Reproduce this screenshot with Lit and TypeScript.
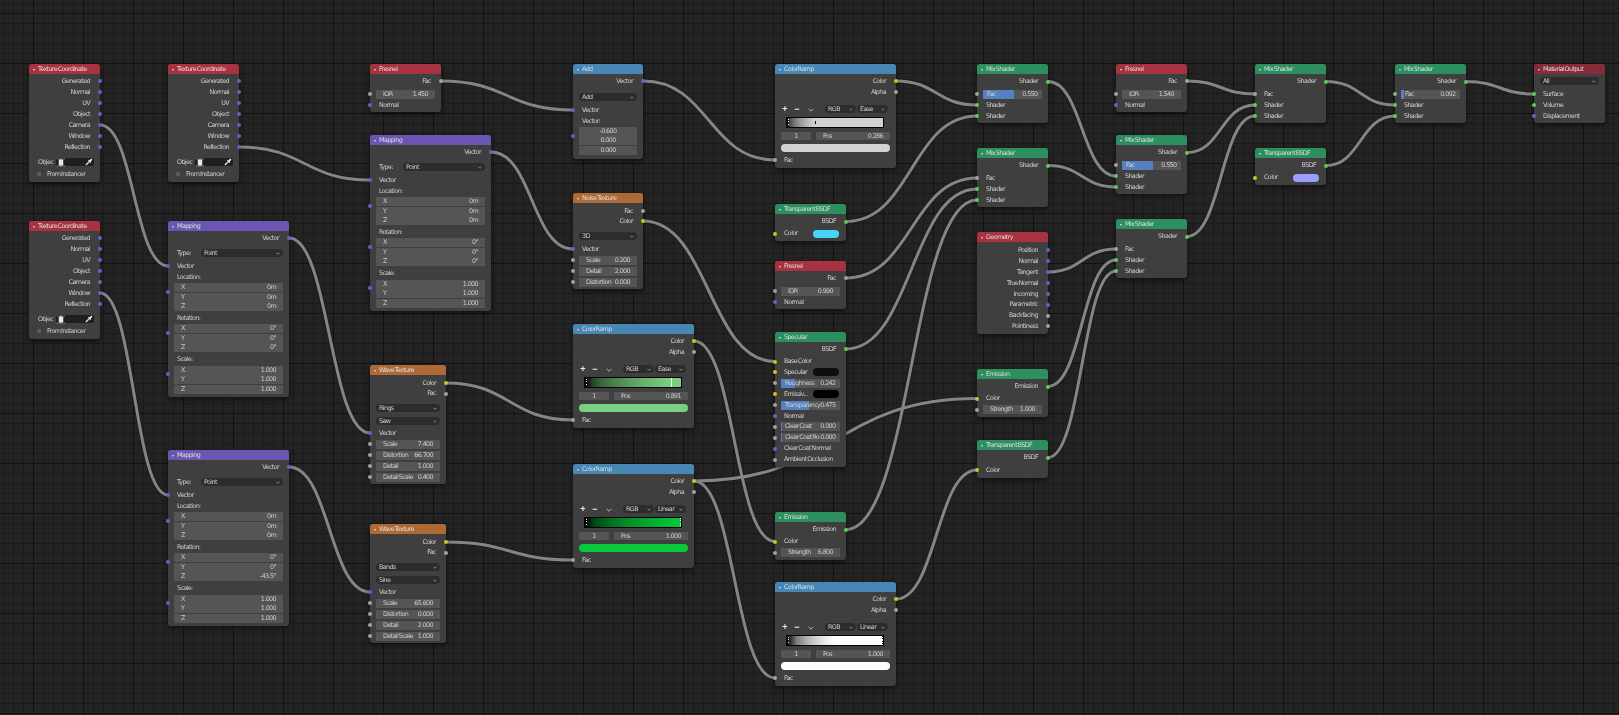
import { LitElement, html, css, svg } from "lit";
import { customElement } from "lit/decorators.js";

type Sock = "v" | "c" | "f" | "s";

interface Row {
  at: number;
  k: string;
  t?: string;
  v?: string;
  s?: Sock;
  id?: string;
  fill?: number;
  dy?: number;
  color?: string;
  pos?: number;
  mode?: string;
}

interface Node {
  id: string;
  title: string;
  cat: string;
  x: number;
  y: number;
  w: number;
  h: number;
  rows: Row[];
}

// height of each row kind, used to place the row centre at its "at" value
const HEIGHTS: Record<string, number> = {
  out: 10, in: 10, head: 10, field: 9, swatch: 9, drop: 9, typed: 9, obj: 9, inst: 9,
  ctrl: 9, bar: 11, nums: 9, big: 9,
};

const out = (at: number, t: string, s: Sock): Row => ({ at, k: "out", t, s });
const inp = (at: number, t: string, s: Sock, id?: string): Row => ({ at, k: "in", t, s, id });
const fld = (at: number, t: string, v: string, s?: Sock, fill?: number): Row => ({ at, k: "field", t, v, s, fill });
const swatch = (at: number, t: string, s: Sock, color: string): Row => ({ at, k: "swatch", t, s, color });
const head = (at: number, t: string, s?: Sock, dy = 0): Row => ({ at, k: "head", t, s, dy });
const drop = (at: number, t: string): Row => ({ at, k: "drop", t });

const texCoord = (id: string, x: number, y: number): Node => ({
  id, title: "Texture Coordinate", cat: "input", x, y, w: 71, h: 118,
  rows: [
    ...["Generated", "Normal", "UV", "Object", "Camera", "Window", "Reflection"].map((t, i) => out(17 + i * 11, t, "v")),
    { at: 98, k: "obj", t: "Objec" },
    { at: 110, k: "inst", t: "From Instancer" },
  ],
});

const mapping = (id: string, x: number, y: number, rz = "0°"): Node => ({
  id, title: "Mapping", cat: "vector", x, y, w: 121, h: 176,
  rows: [
    out(17, "Vector", "v"),
    { at: 32, k: "typed", t: "Type:", v: "Point" },
    inp(45, "Vector", "v"),
    head(56, "Location:", "v", 15),
    fld(66.5, "X", "0m"), fld(76, "Y", "0m"), fld(85.5, "Z", "0m"),
    head(97, "Rotation:", "v", 15),
    fld(107.5, "X", "0°"), fld(117, "Y", "0°"), fld(126.5, "Z", rz),
    head(138, "Scale:", "v", 15),
    fld(149, "X", "1.000"), fld(158.5, "Y", "1.000"), fld(168, "Z", "1.000"),
  ],
});

const fresnel = (id: string, x: number, y: number, ior: string): Node => ({
  id, title: "Fresnel", cat: "input", x, y, w: 71, h: 48,
  rows: [out(17, "Fac", "f"), fld(30, "IOR", ior, "f"), inp(41, "Normal", "v")],
});

const mix = (id: string, x: number, y: number, fac?: string, fill?: number): Node => ({
  id, title: "Mix Shader", cat: "shader", x, y, w: 71, h: 59,
  rows: [
    out(17.5, "Shader", "s"),
    fac ? fld(30, "Fac", fac, "f", fill) : inp(30, "Fac", "f"),
    inp(41, "Shader", "s", "s1"),
    inp(52, "Shader", "s", "s2"),
  ],
});

const transparent = (id: string, x: number, y: number, color?: string): Node => ({
  id, title: "Transparent BSDF", cat: "shader", x, y, w: 71, h: color ? 37 : 38,
  rows: [
    out(17.5, "BSDF", "s"),
    color ? swatch(29.5, "Color", "c", color) : inp(30, "Color", "c"),
  ],
});

const emission = (id: string, x: number, y: number, strength: string): Node => ({
  id, title: "Emission", cat: "shader", x, y, w: 71, h: 48,
  rows: [out(17.5, "Emission", "s"), inp(29.5, "Color", "c"), fld(40.5, "Strength", strength, "f")],
});

const ramp = (id: string, x: number, y: number, color: string, pos: number, mode: string, v: string): Node => ({
  id, title: "ColorRamp", cat: "converter", x, y, w: 121, h: 104,
  rows: [
    out(17, "Color", "c"),
    out(28, "Alpha", "f"),
    { at: 45, k: "ctrl", v: mode },
    { at: 58, k: "bar", color, pos },
    { at: 72, k: "nums", v },
    { at: 84, k: "big", color },
    inp(96, "Fac", "f"),
  ],
});

const wave = (id: string, x: number, y: number, a: string, b: string, vals: string[]): Node => ({
  id, title: "Wave Texture", cat: "texture", x, y, w: 76, h: 119,
  rows: [
    out(18, "Color", "c"),
    out(28.5, "Fac", "f"),
    drop(43, a),
    drop(56, b),
    inp(68, "Vector", "v"),
    fld(79, "Scale", vals[0], "f"),
    fld(90, "Distortion", vals[1], "f"),
    fld(101, "Detail", vals[2], "f"),
    fld(112, "Detail Scale", vals[3], "f"),
  ],
});

const NODES: Node[] = [
  texCoord("tc1", 29, 64),
  texCoord("tc2", 168, 64),
  texCoord("tc3", 29, 221),
  mapping("map1", 168, 221),
  mapping("map2", 168, 450, "-43.5°"),
  mapping("map3", 370, 135),
  fresnel("fr1", 370, 64, "1.450"),
  wave("wave1", 370, 365, "Rings", "Saw", ["7.400", "66.700", "1.000", "0.400"]),
  wave("wave2", 370, 524, "Bands", "Sine", ["65.600", "0.000", "2.000", "1.000"]),
  {
    id: "add", title: "Add", cat: "converter", x: 573, y: 64, w: 70, h: 95,
    rows: [
      out(17, "Vector", "v"),
      drop(33, "Add"),
      inp(46, "Vector", "v"),
      head(57, "Vector:", "v", 15),
      fld(67, "", "-0.600"), fld(76.5, "", "0.000"), fld(86, "", "0.000"),
    ],
  },
  {
    id: "noise", title: "Noise Texture", cat: "texture", x: 573, y: 193, w: 70, h: 96,
    rows: [
      out(18, "Fac", "f"),
      out(28, "Color", "c"),
      drop(43, "3D"),
      inp(56, "Vector", "v"),
      fld(67, "Scale", "0.200", "f"),
      fld(78, "Detail", "2.000", "f"),
      fld(89, "Distortion", "0.000", "f"),
    ],
  },
  ramp("ramp2", 573, 324, "#79d080", 0.891, "Ease", "0.891"),
  ramp("ramp3", 573, 464, "#07c93a", 1, "Linear", "1.000"),
  ramp("ramp1", 775, 64, "#d2d2d2", 0.286, "Ease", "0.286"),
  ramp("ramp4", 775, 582, "#ffffff", 1, "Linear", "1.000"),
  transparent("tr1", 775, 204, "#44d6f6"),
  fresnel("fr2", 775, 261, "0.990"),
  {
    id: "spec", title: "Specular", cat: "shader", x: 775, y: 332, w: 71, h: 135,
    rows: [
      out(17, "BSDF", "s"),
      inp(29.5, "Base Color", "c"),
      swatch(40, "Specular", "c", "#0e0e0e"),
      fld(51, "Roughness", "0.242", "f", 24),
      swatch(62, "Emissiv...", "c", "#000000"),
      fld(73, "Transparency", "0.475", "f", 47),
      inp(84, "Normal", "v"),
      fld(94.5, "Clear Coat", "0.000", "f", 2),
      fld(105.5, "Clear Coat Ro", "0.000", "f", 2),
      inp(116.5, "Clear Coat Normal", "v"),
      inp(127.5, "Ambient Occlusion", "f"),
    ],
  },
  emission("em2", 775, 512, "6.800"),
  mix("mix1", 977, 64, "0.550", 52),
  mix("mix2", 977, 148),
  {
    id: "geo", title: "Geometry", cat: "input", x: 977, y: 232, w: 71, h: 102,
    rows: [
      out(18, "Position", "v"), out(29, "Normal", "v"), out(40, "Tangent", "v"), out(51, "True Normal", "v"),
      out(62, "Incoming", "v"), out(72.5, "Parametric", "v"), out(83.5, "Backfacing", "f"), out(94, "Pointiness", "f"),
    ],
  },
  emission("em1", 977, 369, "1.000"),
  transparent("tr2", 977, 440),
  fresnel("fr3", 1116, 64, "1.540"),
  mix("mix3", 1116, 135, "0.550", 52),
  mix("mix4", 1116, 219),
  mix("mix5", 1255, 64),
  transparent("tr3", 1255, 148, "#9a9cff"),
  mix("mix6", 1395, 64, "0.092", 5),
  {
    id: "output", title: "Material Output", cat: "output", x: 1534, y: 64, w: 71, h: 59,
    rows: [drop(17, "All"), inp(30, "Surface", "s"), inp(41, "Volume", "s"), inp(52, "Displacement", "v")],
  },
];

// from node, output, to node, input
const WIRES: [string, string, string, string][] = [
  ["tc1", "Camera", "map1", "Vector"],
  ["tc2", "Reflection", "map3", "Vector"],
  ["tc3", "Window", "map2", "Vector"],
  ["map1", "Vector", "wave1", "Vector"],
  ["map2", "Vector", "wave2", "Vector"],
  ["fr1", "Fac", "add", "Vector"],
  ["map3", "Vector", "noise", "Vector"],
  ["add", "Vector", "ramp1", "Fac"],
  ["noise", "Color", "spec", "Base Color"],
  ["wave1", "Color", "ramp2", "Fac"],
  ["wave2", "Color", "ramp3", "Fac"],
  ["ramp2", "Color", "em2", "Color"],
  ["ramp3", "Color", "em1", "Color"],
  ["ramp3", "Color", "ramp4", "Fac"],
  ["ramp4", "Color", "tr2", "Color"],
  ["ramp1", "Color", "mix1", "s1"],
  ["tr1", "BSDF", "mix1", "s2"],
  ["fr2", "Fac", "mix2", "Fac"],
  ["spec", "BSDF", "mix2", "s1"],
  ["em2", "Emission", "mix2", "s2"],
  ["mix1", "Shader", "mix3", "s1"],
  ["mix2", "Shader", "mix3", "s2"],
  ["geo", "Tangent", "mix4", "Fac"],
  ["em1", "Emission", "mix4", "s1"],
  ["tr2", "BSDF", "mix4", "s2"],
  ["fr3", "Fac", "mix5", "Fac"],
  ["mix3", "Shader", "mix5", "s1"],
  ["mix4", "Shader", "mix5", "s2"],
  ["mix5", "Shader", "mix6", "s1"],
  ["tr3", "BSDF", "mix6", "s2"],
  ["mix6", "Shader", "output", "Surface"],
];

function wirePath(w: [string, string, string, string]) {
  const a = NODES.find((n) => n.id === w[0])!;
  const b = NODES.find((n) => n.id === w[2])!;
  const ra = a.rows.find((r) => r.k === "out" && r.t === w[1])!;
  const rb = b.rows.find((r) => r.k !== "out" && (r.id ?? r.t) === w[3])!;
  const x1 = a.x + a.w, y1 = a.y + ra.at;
  const x2 = b.x, y2 = b.y + rb.at;
  const h = (x2 - x1) * 0.5;
  return `M${x1} ${y1}C${x1 + h} ${y1} ${x2 - h} ${y2} ${x2} ${y2}`;
}

function rampGradient(color: string, pos: number) {
  const c = [1, 3, 5].map((i) => parseInt(color.slice(i, i + 2), 16));
  // the white ramp in the shot saturates well before its end
  const gain = color === "#ffffff" ? 1.4 : 1;
  const stops: string[] = [];
  for (let i = 0; i <= 10; i++) {
    const t = i / 10;
    const g = t <= 0.0031 ? t * 12.92 : 1.055 * Math.pow(t, 1 / 2.4) - 0.055;
    stops.push(`rgb(${c.map((v) => Math.min(255, Math.round(v * g * gain))).join(",")}) ${(t * pos * 100).toFixed(1)}%`);
  }
  return `linear-gradient(90deg,${stops.join(",")})`;
}

const chevron = html`<svg class="chev" viewBox="0 0 5 3"><path d="M.5 .5L2.5 2.500L4.500 .5" fill="none" stroke="#bbb" stroke-width=".8"/></svg>`;

const cube = html`<svg class="cube" viewBox="0 0 8 10">
  <rect x="1.5" y="1.5" width="5" height="7" fill="#e8e8e8"/>
  <path d="M0 1h1M0 9h1M7 1h1M7 9h1M3 0h2M3 10h2" stroke="#ddd" stroke-width="1"/>
</svg>`;

const dropper = html`<svg class="dropper" viewBox="0 0 9 9">
  <path d="M1 8L5 4" stroke="#ddd" stroke-width="1.6"/>
  <path d="M5 2.5L6.8 .9a1 1 0 0 1 1.3 1.3L6.5 4L7 4.800L6.300 5.500L3.500 2.700L4.200 2z" fill="#eee"/>
</svg>`;

@customElement("app-root")
export class AppRoot extends LitElement {
  static styles = css`
    :host {
      display: block;
      background: #232323;
      font-family: "DejaVu Sans", sans-serif;
      font-size: 6.4px;
      letter-spacing: -0.62px;
      word-spacing: -0.8px;
      color: #cdcdcd;
    }
    .canvas {
      position: relative;
      width: 1619px;
      height: 715px;
      overflow: hidden;
      filter: blur(0.3px);
      background-color: #232323;
      background-image:
        linear-gradient(#121212 1px, transparent 1px),
        linear-gradient(90deg, #121212 1px, transparent 1px),
        linear-gradient(#1b1b1b 1px, transparent 1px),
        linear-gradient(90deg, #1b1b1b 1px, transparent 1px);
      background-size: 50px 50px, 50px 50px, 10px 10px, 10px 10px;
      background-position: 0 13px, 33px 0, 0 3px, 3px 0;
    }
    .wires {
      position: absolute;
      left: 0;
      top: 0;
    }
    .wire-edge {
      fill: none;
      stroke: #1c1c1c;
      stroke-width: 4.8;
    }
    .wire {
      fill: none;
      stroke: #858585;
      stroke-width: 3;
    }
    .node {
      position: absolute;
      display: flex;
      flex-direction: column;
      background: #3f3f3f;
      border-radius: 3px;
      box-shadow: 0 2px 5px rgba(0, 0, 0, 0.55);
    }
    .title {
      flex: none;
      display: flex;
      align-items: center;
      gap: 3px;
      height: 10px;
      padding: 0 0 1px 4px;
      box-sizing: border-box;
      border-radius: 3px 3px 0 0;
      color: #dcdcdc;
      white-space: nowrap;
    }
    .title::before {
      content: "";
      margin-top: 2px;
      border-left: 1.8px solid transparent;
      border-right: 1.8px solid transparent;
      border-top: 2.6px solid #e4e4e4;
    }
    .input { background: #a8323f; }
    .vector { background: #6b57b3; }
    .converter { background: #4687b4; }
    .texture { background: #ad6a36; }
    .shader { background: #2d8f60; }
    .output { background: #862c39; }

    .row {
      position: relative;
      flex: none;
      display: flex;
      align-items: center;
      white-space: nowrap;
    }
    .row span { position: relative; top: -0.5px; }
    .k-out { height: 10px; justify-content: flex-end; padding-right: 10px; }
    .k-in, .k-head { height: 10px; padding-left: 9px; }
    .k-field, .k-swatch, .k-drop, .k-typed, .k-nums, .k-big, .k-ctrl, .k-obj, .k-inst { height: 9px; }
    .k-bar { height: 11px; }

    .sock {
      position: absolute;
      width: 4px;
      height: 4px;
      margin-top: -2px;
      border-radius: 50%;
      top: 50%;
      left: -2px;
    }
    .k-out .sock { left: auto; right: -2px; }
    .sock-v { background: #6363c7; }
    .sock-c { background: #c7c729; }
    .sock-f { background: #a1a1a1; }
    .sock-s { background: #63c763; }

    .field {
      position: relative;
      flex: 1;
      display: flex;
      justify-content: space-between;
      align-items: center;
      height: 9px;
      margin: 0 6px;
      padding: 0 7px;
      background: #555;
      overflow: hidden;
    }
    .field.center { justify-content: center; padding: 0; }
    .field.slider { padding: 0 4.5px 0 4px; }
    .fill {
      position: absolute;
      left: 0;
      top: 0;
      bottom: 0;
      background: #5680c2;
    }
    .k-swatch { padding-left: 9px; justify-content: space-between; padding-right: 7px; }
    .chip { width: 26px; height: 8px; border-radius: 4px; }
    .pill {
      flex: 1;
      display: flex;
      justify-content: space-between;
      align-items: center;
      height: 8px;
      margin: 0 6px;
      padding: 0 3px;
      border-radius: 4px;
      background: #2c2c2c;
    }
    .typed-label { padding-left: 9px; width: 16px; }
    .k-typed .pill { margin-left: 8px; }
    .chev { width: 4px; height: 3px; }

    .k-obj { padding-left: 9px; }
    .obj-label { width: 18px; }
    .obj-field {
      flex: none;
      display: flex;
      justify-content: space-between;
      align-items: center;
      width: 38px;
      height: 8px;
      padding: 0 1px;
      box-sizing: border-box;
      background: #1f1f1f;
      border-radius: 2px;
    }
    .cube { width: 8px; height: 9px; }
    .dropper { width: 8px; height: 8px; }
    .k-inst { padding-left: 8px; gap: 6px; }
    .check { width: 4px; height: 4px; background: #595959; }

    .k-ctrl { padding: 0 6px; }
    .tool {
      flex: none;
      width: 12px;
      text-align: center;
      color: #eee;
      font: bold 9px "Liberation Sans", sans-serif;
      letter-spacing: 0;
    }
    .k-ctrl .pill { margin: 0; flex: none; width: 31px; box-sizing: border-box; }
    .k-ctrl .pill + .pill { margin-left: 1px; }
    .tool .chev { width: 6px; height: 4px; margin-left: 4px; }
    .tools { display: flex; align-items: center; flex: none; width: 46px; margin-left: -2px; }

    .bar {
      position: relative;
      margin-left: 11px;
      width: 98px;
      height: 11px;
      box-sizing: border-box;
      border: 1px solid #000;
      border-bottom-width: 1.5px;
    }
    .stop {
      position: absolute;
      top: 0;
      bottom: 0;
      width: 1px;
      background: #fff;
    }
    .stop-short { top: 3px; bottom: 3px; background: #000; }
    .stop-end {
      left: auto;
      right: 0;
      background: repeating-linear-gradient(#fff 0 1px, transparent 1px 2.4px);
    }
    .stop-end-dark { background: repeating-linear-gradient(#111 0 1px, transparent 1px 2.4px); }
    .first {
      position: absolute;
      left: 1px;
      top: 1px;
      bottom: 1px;
      width: 1px;
      background: repeating-linear-gradient(#fff 0 1px, transparent 1px 2.4px);
    }

    .k-nums { padding: 0 6px; gap: 5px; }
    .num {
      flex: none;
      display: flex;
      justify-content: space-between;
      align-items: center;
      height: 8px;
      box-sizing: border-box;
      background: #555;
      padding: 0 7px;
    }
    .num-a { width: 30px; justify-content: center; }
    .num-b { width: 74px; }
    .big {
      margin: 0 6px;
      flex: 1;
      height: 8px;
      border-radius: 4px;
    }
  `;

  renderStop(r: Row) {
    if (r.pos === 1) {
      return html`<i class="stop stop-end ${r.color === "#ffffff" ? "stop-end-dark" : ""}"></i>`;
    }
    const short = r.color === "#d2d2d2" ? "stop-short" : "";
    return html`<i class="stop ${short}" style="left:${(r.pos! * 96).toFixed(1)}px"></i>`;
  }

  renderRow(r: Row, prev: number) {
    const h = HEIGHTS[r.k];
    const mt = r.at - h / 2 - prev;
    const sock = r.s
      ? html`<i class="sock sock-${r.s}" style=${r.dy ? `margin-top:${r.dy - 2}px` : ""}></i>`
      : "";
    let body: unknown = "";
    switch (r.k) {
      case "out":
      case "in":
      case "head":
        body = html`<span>${r.t}</span>`;
        break;
      case "field":
        body = html`<div class="field ${r.t ? "" : "center"} ${r.fill ? "slider" : ""}">
          ${r.fill ? html`<i class="fill" style="width:${r.fill}%"></i>` : ""}
          ${r.t ? html`<span>${r.t}</span>` : ""}<span>${r.v}</span>
        </div>`;
        break;
      case "swatch":
        body = html`<span>${r.t}</span><i class="chip" style="background:${r.color}"></i>`;
        break;
      case "drop":
        body = html`<div class="pill"><span>${r.t}</span>${chevron}</div>`;
        break;
      case "typed":
        body = html`<span class="typed-label">${r.t}</span>
          <div class="pill"><span>${r.v}</span>${chevron}</div>`;
        break;
      case "obj":
        body = html`<span class="obj-label">${r.t}</span><div class="obj-field">${cube}${dropper}</div>`;
        break;
      case "inst":
        body = html`<i class="check"></i><span>${r.t}</span>`;
        break;
      case "ctrl":
        body = html`<div class="tools">
            <span class="tool">+</span><span class="tool">−</span><span class="tool">${chevron}</span>
          </div>
          <div class="pill"><span>RGB</span>${chevron}</div>
          <div class="pill"><span>${r.v}</span>${chevron}</div>`;
        break;
      case "bar":
        body = html`<div class="bar" style="background:${rampGradient(r.color!, r.pos!)}">
          <i class="first"></i>
          ${this.renderStop(r)}
        </div>`;
        break;
      case "nums":
        body = html`<div class="num num-a"><span>1</span></div><div class="num num-b"><span>Pos</span><span>${r.v}</span></div>`;
        break;
      case "big":
        body = html`<div class="big" style="background:${r.color}"></div>`;
        break;
    }
    return html`<div class="row k-${r.k}" style="margin-top:${mt}px">${sock}${body}</div>`;
  }

  renderNode(n: Node) {
    let prev = 10;
    return html`<section class="node" style="left:${n.x}px;top:${n.y}px;width:${n.w}px;height:${n.h}px">
      <header class="title ${n.cat}">${n.title}</header>
      ${n.rows.map((r) => {
        const el = this.renderRow(r, prev);
        prev = r.at + HEIGHTS[r.k] / 2;
        return el;
      })}
    </section>`;
  }

  render() {
    const paths = WIRES.map(wirePath);
    return html`<div class="canvas">
      <svg class="wires" width="1619" height="715">
        ${paths.map((d) => svg`<path class="wire-edge" d=${d}></path>`)}
        ${paths.map((d) => svg`<path class="wire" d=${d}></path>`)}
      </svg>
      ${NODES.map((n) => this.renderNode(n))}
    </div>`;
  }
}
